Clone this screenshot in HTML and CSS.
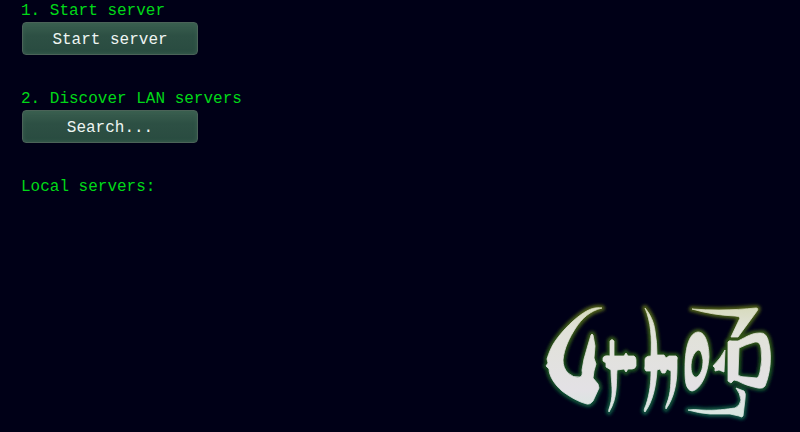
FILE: index.html
```html
<!DOCTYPE html>
<html lang="en">
<head>
<meta charset="utf-8">
<title>LAN servers</title>
<link rel="stylesheet" href="styles.css">
</head>
<body>
<main class="page">
  <section class="step">
    <p class="label" id="start-label">1. Start server</p>
    <button class="button" type="button" aria-describedby="start-label">Start server</button>
  </section>
  <section class="step">
    <p class="label" id="search-label">2. Discover LAN servers</p>
    <button class="button" type="button" aria-describedby="search-label">Search...</button>
  </section>
  <section class="step">
    <p class="label">Local servers:</p>
  </section>
  <svg class="logo" viewBox="535 295 250 130" aria-hidden="true">
    <defs>
      <linearGradient id="bone" gradientUnits="userSpaceOnUse" x1="0" y1="306" x2="0" y2="418">
        <stop offset="0" stop-color="#d6dabb"/>
        <stop offset=".2" stop-color="#e1e2d8"/>
        <stop offset=".75" stop-color="#e3e1e5"/>
        <stop offset="1" stop-color="#d5e6df"/>
      </linearGradient>
      <linearGradient id="halo" gradientUnits="userSpaceOnUse" x1="0" y1="306" x2="0" y2="418">
        <stop offset="0" stop-color="#4c5a18"/>
        <stop offset=".5" stop-color="#1b4d19"/>
        <stop offset="1" stop-color="#075044"/>
      </linearGradient>
      <filter id="soft" x="-10%" y="-10%" width="120%" height="120%">
        <feGaussianBlur stdDeviation="1.7"/>
      </filter>
      <filter id="edge" x="-10%" y="-10%" width="120%" height="120%">
        <feGaussianBlur stdDeviation=".5"/>
      </filter>
      <g id="shapes">
        <path d="M602 308C595 307 590 309 585 312C575 318 563 330 556 340C551 347 549 353 547 359L548 363L546 366L549 369C549 376 555 385 562 391C570 397 579 402 587 404Q590 405 593 401L599 388L598 384L593 378L594 371L596 364L594 358L595 346L593 335Q592 333 591 335L588 345L584 359L582 370Q583 376 580 377Q573 378 568 373Q563 368 563 360C564 348 570 337 575 329C582 318 590 311 602 308Z"/>
        <path d="M610 341Q612 338 614 341V356H624L626 353L628 356H634Q636 357 636 360V366Q635 369 632 369H628L626 372L624 369L617 370C616 382 618 398 609 412Q608 411 610 406C614 393 611 382 611 370L606 367V363L603 361V358Q604 355 610 356Z"/>
        <path d="M645 308C650 314 654 322 655 331Q657 342 657 355H664L666 358L669 356H676Q678 357 677 360V368C677 383 674 398 666 409Q665 407 667 403C671 393 671 382 671 371L667 369L665 373L662 373L660 369L657 370C656 386 653 401 645 412Q643 411 646 405C650 393 651 382 651 371H646Q644 369 645 366V360Q645 356 651 356C652 338 651 322 645 308Z"/>
        <path fill-rule="evenodd" d="M698 332C706 332 709 346 709 357C708 375 700 390 692 391C685 390 685 378 685 369C685 351 688 333 698 332ZM698 350C693 353 691 360 691 367C691 374 694 378 697 377C702 373 703 367 703 360C702 354 701 350 698 350Z"/>
        <path d="M692 309Q705 310 719 310C733 310 745 309 756 308Q759 308 757 311L738 337H731L740 318Q739 316 735 316Q712 315 692 309Z"/>
        <path d="M725 350L724 372L719 370L715 371V368L713 366Q721 358 725 350Z"/>
        <path fill-rule="evenodd" d="M728 342Q729 340 732 341L738 341C748 336 752 333 760 333Q767 332 769 344C772 358 770 374 765 386Q763 389 758 388C749 386 743 384 738 381L734 380L731 383L728 381V365ZM739 348L738 375Q740 377 746 377L757 378Q759 377 760 372Q763 360 761 348Q760 341 755 342Q747 344 739 348Z"/>
        <path d="M736 388L744 391Q746 393 745 399L743 416Q742 418 739 416L730 414H710Q698 413 688 410Q694 409 701 410C716 411 727 409 735 408Q740 406 741 400Q740 393 736 388Z"/>
      </g>
    </defs>
    <use href="#shapes" fill="url(#halo)" stroke="url(#halo)" stroke-width="6" stroke-linejoin="round" filter="url(#soft)"/>
    <use href="#shapes" fill="url(#bone)" stroke="url(#bone)" stroke-width=".8" stroke-linejoin="round" filter="url(#edge)"/>
  </svg>
</main>
</body>
</html>
```

FILE: styles.css
```css
* {
  box-sizing: border-box;
}

body {
  margin: 0;
  background: #000017;
  color: #00d818;
  font: 16px/22px "Liberation Mono", monospace;
}

.page {
  display: flex;
  flex-direction: column;
  gap: 33px;
  min-height: 100vh;
  padding: 0 15px 7px 21px;
}

.label {
  margin: 0;
}

.button {
  display: block;
  width: 176px;
  height: 33px;
  margin: 0 0 0 1px;
  padding: 3px 0 0;
  border: 1px solid #4b6358;
  border-radius: 4px;
  background: linear-gradient(#3a5f4f, #2d5044 40%, #294b40);
  box-shadow: inset 0 0 4px #3a6052;
  color: #eef5f2;
  font: inherit;
}

.logo {
  width: 250px;
  height: 130px;
  margin-top: auto;
  align-self: flex-end;
}
```
